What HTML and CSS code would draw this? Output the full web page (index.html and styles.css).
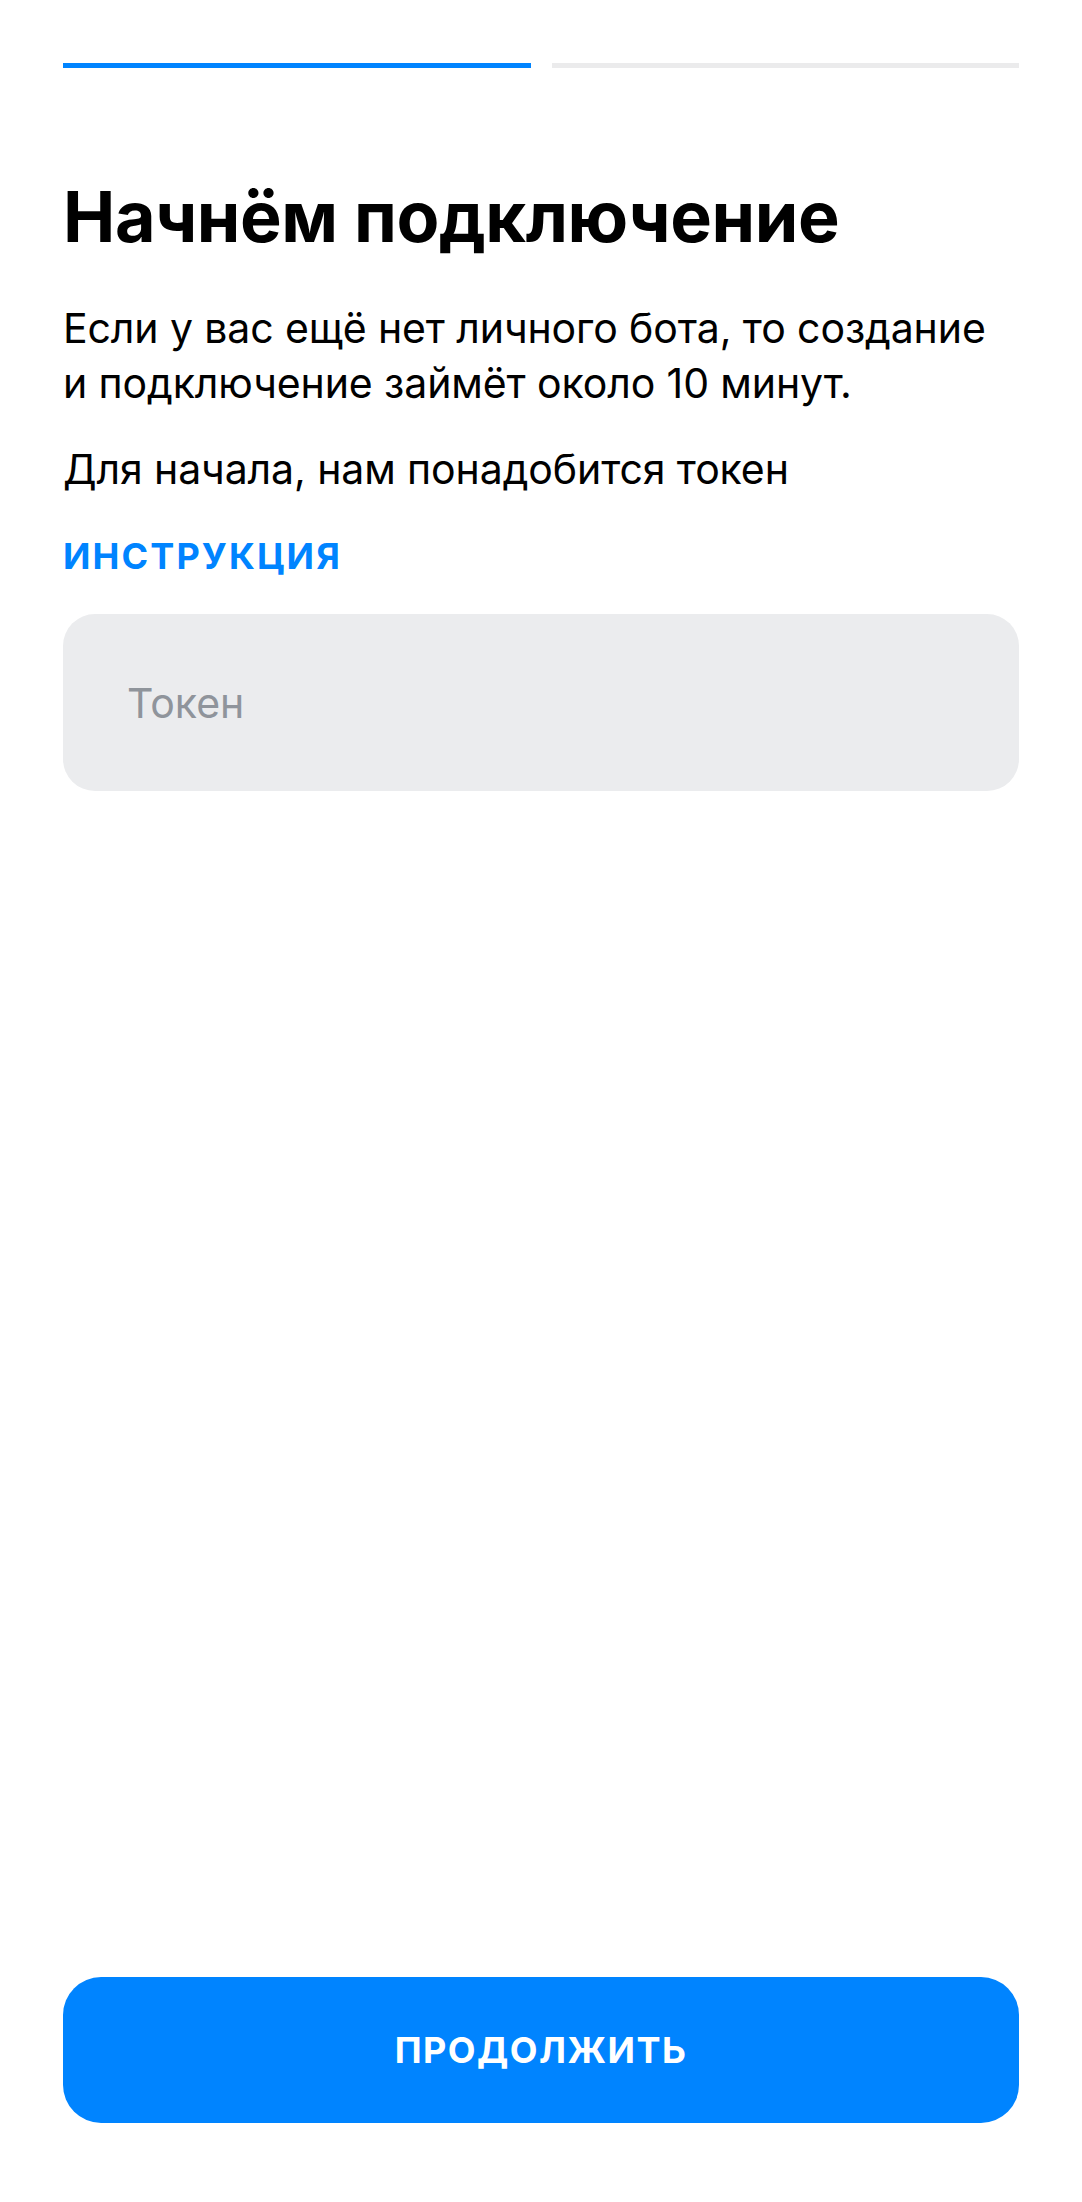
FILE: index.html
```html
<!DOCTYPE html>
<html lang="ru">
<head>
<meta charset="utf-8">
<title>Начнём подключение</title>
<link rel="stylesheet" href="styles.css">
</head>
<body>
<div class="page">
  <div class="progress">
    <div class="step step-active"></div>
    <div class="step"></div>
  </div>
  <h1 class="title">Начнём подключение</h1>
  <p class="text">Если у вас ещё нет личного бота, то создание и подключение займёт около 10 минут.</p>
  <p class="text text-second">Для начала, нам понадобится токен</p>
  <a class="link" href="#">Инструкция</a>
  <input class="field" type="text" placeholder="Токен">
  <button class="button" type="button">Продолжить</button>
</div>
</body>
</html>
```
FILE: styles.css
```css
* { box-sizing: border-box; }
html, body { margin: 0; padding: 0; background: #fff; }
body { font-family: Inter, "Noto Sans", sans-serif; color: #000; }
.page {
  min-height: 2202px;
  padding: 63px 63px 79px;
  display: flex;
  flex-direction: column;
}
.progress {
  display: flex;
  gap: 21px;
}
.step {
  flex: 1;
  height: 5px;
  background: #ebebec;
}
.step-active { background: #0084ff; }
.title {
  margin: 107px 0 0;
  font-size: 70px;
  line-height: 84px;
  font-weight: 700;
  letter-spacing: -0.4px;
}
.text {
  margin: 42px 0 0;
  font-size: 41px;
  line-height: 55px;
  font-weight: 400;
  letter-spacing: -0.1px;
}
.text-second { margin-top: 31px; }
.link {
  margin-top: 37px;
  align-self: flex-start;
  font-size: 36px;
  line-height: 44px;
  font-weight: 700;
  letter-spacing: 2.1px;
  text-transform: uppercase;
  color: #0084ff;
  text-decoration: none;
}
.field {
  margin-top: 36px;
  height: 177px;
  width: 100%;
  border: 0;
  border-radius: 32px;
  background: #ebecee;
  padding: 0 40px 0 64px;
  font-family: inherit;
  font-size: 41px;
  color: #000;
  outline: none;
}
.field::placeholder { color: #8f949b; }
.button {
  margin-top: auto;
  height: 146px;
  width: 100%;
  border: 0;
  border-radius: 38px;
  background: #0084ff;
  color: #fff;
  font-family: inherit;
  font-size: 36px;
  font-weight: 700;
  letter-spacing: 1.5px;
  text-transform: uppercase;
}
```
